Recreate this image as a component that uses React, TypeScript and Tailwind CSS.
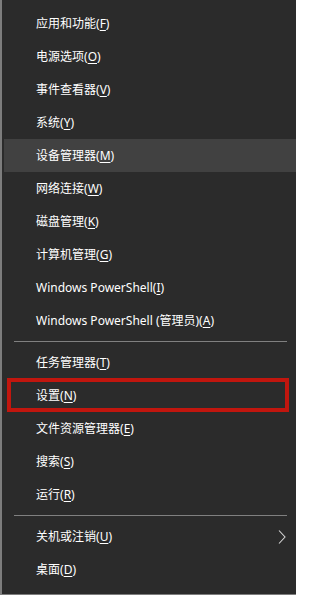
import React from "react";

type Item = { label: string; key: string; arrow?: boolean; hover?: boolean; boxed?: boolean };

const groups: Item[][] = [
  [
    { label: "应用和功能", key: "F" },
    { label: "电源选项", key: "O" },
    { label: "事件查看器", key: "V" },
    { label: "系统", key: "Y" },
    { label: "设备管理器", key: "M", hover: true },
    { label: "网络连接", key: "W" },
    { label: "磁盘管理", key: "K" },
    { label: "计算机管理", key: "G" },
    { label: "Windows PowerShell", key: "I" },
    { label: "Windows PowerShell (管理员)", key: "A" },
  ],
  [
    { label: "任务管理器", key: "T" },
    { label: "设置", key: "N", boxed: true },
    { label: "文件资源管理器", key: "E" },
    { label: "搜索", key: "S" },
    { label: "运行", key: "R" },
  ],
  [
    { label: "关机或注销", key: "U", arrow: true },
    { label: "桌面", key: "D" },
  ],
];

function Row({ item }: { item: Item }) {
  return (
    <div
      className={`relative flex h-[33px] items-center pl-[32px] pr-[10px] ${
        item.hover ? "bg-[#414141]" : ""
      }`}
    >
      <span className="text-[12px] leading-none text-white">
        {item.label}(<span className="underline underline-offset-2">{item.key}</span>)
      </span>
      {item.arrow && (
        <svg className="ml-auto" width="8" height="14" viewBox="0 0 8 14" fill="none">
          <polyline points="1,0.5 7,7 1,13.5" stroke="#d6d6d6" strokeWidth="1.1" />
        </svg>
      )}
      {item.boxed && (
        <div className="pointer-events-none absolute top-[-1px] bottom-0 left-[3px] right-[7px] border-4 border-[#c1160e]" />
      )}
    </div>
  );
}

export default function App() {
  return (
    <div
      className="h-[595px] w-[296px] overflow-hidden bg-[#2b2b2b]"
      style={{ fontFamily: '"Noto Sans", "Noto Sans CJK SC", sans-serif' }}
    >
      <div className="flex h-full flex-col border-b border-l-2 border-[#7d7d7d] pl-[2px] pt-[7px]">
        {groups.map((g, i) => (
          <div key={i}>
            {i > 0 && <div className="my-[4px] ml-[10px] mr-[9px] h-px bg-[#808080]" />}
            {g.map((item) => (
              <Row key={item.key} item={item} />
            ))}
          </div>
        ))}
      </div>
    </div>
  );
}
